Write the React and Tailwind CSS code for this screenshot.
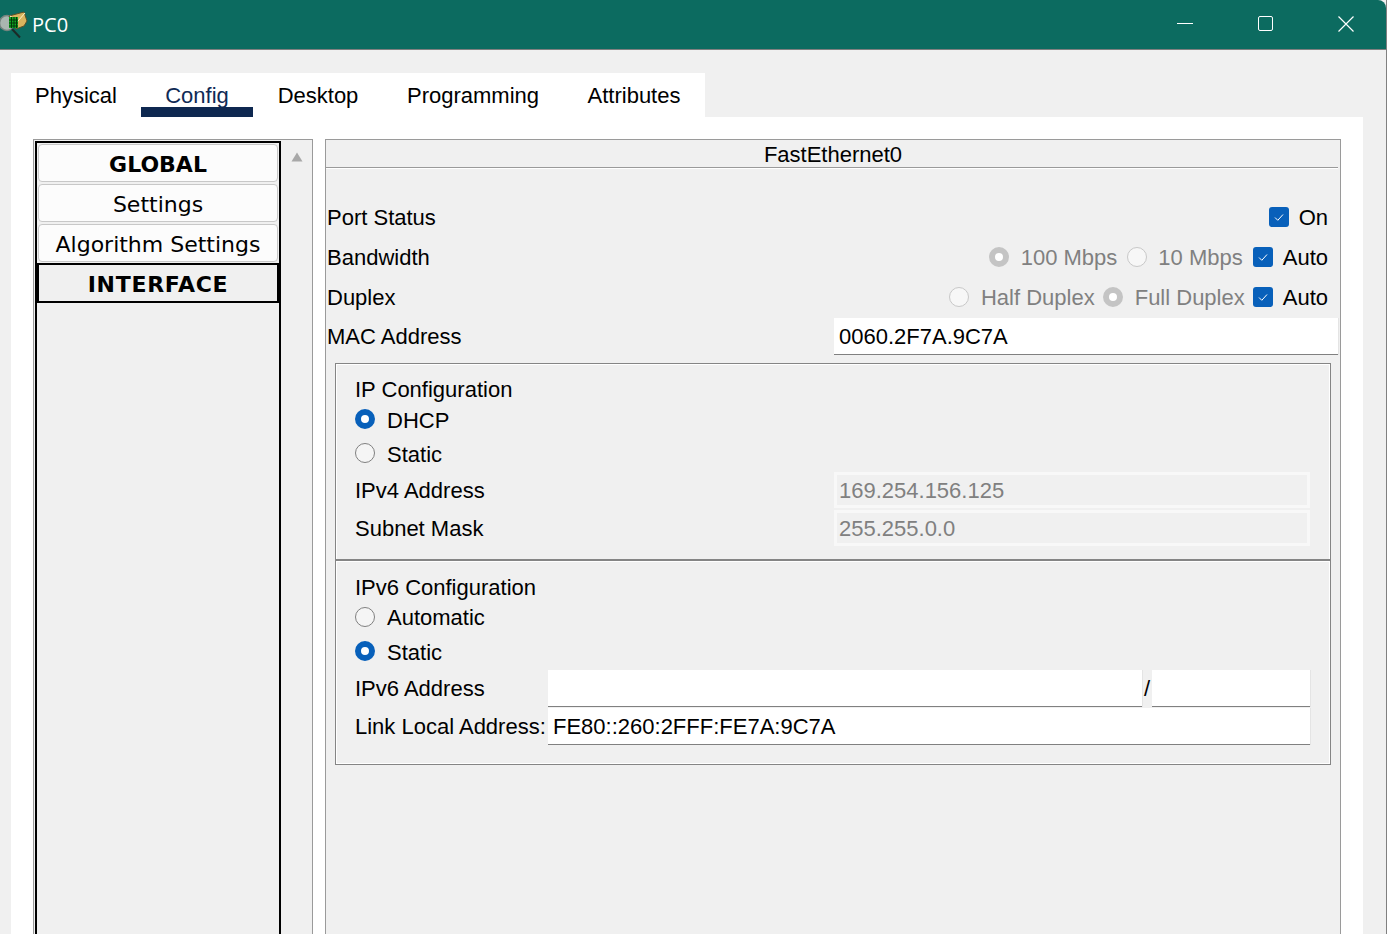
import React from 'react';

const tabs = [
  { label: 'Physical', width: 'w-[130px]' },
  { label: 'Config', width: 'w-[112px]', active: true },
  { label: 'Desktop', width: 'w-[130px]' },
  { label: 'Programming', width: 'w-[180px]' },
  { label: 'Attributes', width: 'w-[142px]' },
];

function AppIcon() {
  return (
    <svg width="28" height="28" viewBox="0 0 28 28" className="shrink-0">
      <circle cx="7" cy="12" r="7.5" fill="#a9b6b0" stroke="#75837e" strokeWidth="1.5" />
      <path d="M12 18l8 8.5" stroke="#1c2a27" strokeWidth="2" />
      <path d="M9 5l15-4 3 9-3 5-8 3z" fill="#d8b45e" stroke="#5f5026" strokeWidth="1" />
      <path d="M10 5l8 5 7-8" fill="none" stroke="#fff3c8" strokeWidth="1" />
      <rect x="9" y="6" width="9" height="11" fill="#10a822" />
      <path d="M11.5 6v11M14 6v11M16.5 6v11M9 9h9M9 12h9M9 15h9" stroke="#04350a" strokeWidth="1" />
    </svg>
  );
}

function Check() {
  return (
    <span className="w-5 h-5 rounded-[3px] bg-[#0860ba] flex items-center justify-center shrink-0">
      <svg width="12" height="12" viewBox="0 0 12 12" fill="none">
        <path d="M2 6.5l2.8 2.8L10 3.5" stroke="#fff" strokeWidth="1" />
      </svg>
    </span>
  );
}

function Radio({ kind, lift }) {
  const shift = lift ? '-translate-y-px' : '';
  if (kind === 'on') {
    return <span className={`w-5 h-5 rounded-full border-[6px] border-[#0860ba] bg-white shrink-0 ${shift}`} />;
  }
  if (kind === 'off') {
    return <span className={`w-5 h-5 rounded-full border border-[#808080] bg-[#f5f5f5] shrink-0 ${shift}`} />;
  }
  if (kind === 'disabledOn') {
    return <span className="w-5 h-5 rounded-full border-[6px] border-[#c4c4c4] bg-white shrink-0" />;
  }
  return <span className="w-5 h-5 rounded-full border border-[#c8c8c8] bg-[#f7f7f7] shrink-0" />;
}

function Row({ label, children }) {
  return (
    <div className="h-10 flex items-center justify-between pl-[1px] pr-[12px]">
      <span>{label}</span>
      <div className="flex items-center">{children}</div>
    </div>
  );
}

function RadioRow({ kind, label, className, lift, gap = 'gap-3' }) {
  return (
    <div className={`flex items-center ${gap} ${className}`}>
      <Radio kind={kind} lift={lift} />
      <span>{label}</span>
    </div>
  );
}

function ReadOnlyField({ value, className }) {
  return (
    <div className={`w-[476px] border-[3px] border-[#f8f8f8] bg-[#f0f0f0] text-[#808080] flex items-center pl-[2px] ${className}`}>
      {value}
    </div>
  );
}

function WhiteField({ value, className }) {
  return (
    <div className={`bg-white border-b border-[#808080] shadow-[1px_0_0_#e4e4e4] flex items-center pl-[5px] pt-[1px] ${className}`}>
      {value}
    </div>
  );
}

function Sidebar() {
  const btn = 'mx-[1px] pt-[2px] rounded-[4px] border border-[#c8c8c8] bg-[#fcfcfc] flex items-center justify-center';
  return (
    <div className="w-[280px] h-[900px] border border-[#9a9a9a] bg-[#f0f0f0] flex shrink-0 pl-[1px] pt-[1px] font-['DejaVu_Sans',sans-serif] text-[22px]">
      <div className="w-[246px] h-full border-2 border-black pt-[1px] flex flex-col">
        <div className={`${btn} h-[38px] font-bold`}>GLOBAL</div>
        <div className={`${btn} h-[38px] mt-[2px]`}>Settings</div>
        <div className={`${btn} h-[38px] mt-[2px]`}>Algorithm Settings</div>
        <div className="h-[40px] mt-[1px] pt-[2px] border-2 border-black bg-[#f0f0f0] flex items-center justify-center font-bold tracking-[0.7px]">INTERFACE</div>
      </div>
      <div className="flex-1 flex justify-center pt-[11px]">
        <svg width="12" height="10" viewBox="0 0 12 10">
          <path d="M6 0.5L11.5 9.5H0.5z" fill="#a8a8a8" />
        </svg>
      </div>
    </div>
  );
}

export default function App() {
  return (
    <div className="w-[1387px] h-[934px] overflow-hidden bg-[#f0f0f0] text-black text-[22px] font-['Liberation_Sans',Arial,sans-serif] flex flex-col border-r border-[#808080]">
      <div className="h-[50px] shrink-0 bg-[#0c6b60] border-b border-[#808080] rounded-tr-[8px] text-white flex items-center">
        <AppIcon />
        <span className="ml-[4px] text-[20px] font-['Open_Sans',sans-serif]">PC0</span>
        <div className="ml-auto flex items-center pb-[2px]">
          <svg width="16" height="2" viewBox="0 0 16 2" className="mr-[65px]">
            <rect width="16" height="1" fill="#fff" />
          </svg>
          <span className="w-[15px] h-[15px] rounded-[2px] border-[1.5px] border-[#fff] mr-[65px]" />
          <svg width="16" height="16" viewBox="0 0 16 16" className="mr-[32px]" fill="none">
            <path d="M0.5 0.5l15 15M15.5 0.5l-15 15" stroke="#fff" strokeWidth="1.2" />
          </svg>
        </div>
      </div>

      <div className="flex-1 pt-[23px] pl-[11px] pr-[23px] flex flex-col">
        <div className="flex w-[694px] h-[44px] bg-white shrink-0">
          {tabs.map(tab => (
            <div key={tab.label} className={`${tab.width} relative flex justify-center pt-[8px]`}>
              <span className={`leading-[29px] ${tab.active ? 'text-[#0f2a55]' : ''}`}>{tab.label}</span>
              {tab.active && <span className="absolute left-0 right-0 bottom-0 h-[10px] bg-[#0e2850]" />}
            </div>
          ))}
        </div>

        <div className="flex-1 bg-white pl-[22px] pt-[22px] flex gap-[12px]">
          <Sidebar />

          <div className="w-[1016px] h-[900px] border border-[#9a9a9a] bg-[#f0f0f0] shrink-0">
            <div className="h-[28px] mr-[2px] pt-[2px] pl-[2px] border-b border-[#9a9a9a] shadow-[0_1px_0_#fff] flex items-center justify-center">
              FastEthernet0
            </div>

            <div className="pt-[29px]">
              <Row label="Port Status">
                <Check />
                <span className="ml-[10px]">On</span>
              </Row>
              <Row label="Bandwidth">
                <RadioRow kind="disabledOn" label="100 Mbps" className="text-[#808080]" />
                <RadioRow kind="disabledOff" label="10 Mbps" gap="gap-[11px]" className="text-[#808080] ml-[10px] mr-[10px]" />
                <Check />
                <span className="ml-[10px]">Auto</span>
              </Row>
              <Row label="Duplex">
                <RadioRow kind="disabledOff" label="Half Duplex" className="text-[#808080]" />
                <RadioRow kind="disabledOn" label="Full Duplex" className="text-[#808080] ml-[8px] mr-[8px]" />
                <Check />
                <span className="ml-[10px]">Auto</span>
              </Row>
              <div className="h-[37px] mt-[1px] flex items-center justify-between pl-[1px] pr-[2px]">
                <span>MAC Address</span>
                <WhiteField value="0060.2F7A.9C7A" className="w-[504px] h-[37px]" />
              </div>
            </div>

            <div className="ml-[9px] mt-[8px] w-[996px] h-[402px] border border-[#858585] shadow-[inset_0_0_0_1px_#fff] pl-[19px] flex flex-col">
              <div className="h-[195px] pt-[11px]">
                <div className="h-[30px] pb-[2px] flex items-center">IP Configuration</div>
                <RadioRow kind="on" label="DHCP" className="h-[30px]" lift />
                <RadioRow kind="off" label="Static" className="h-[34px] mt-[2px]" lift />
                <div className="h-[36px] mt-[1px] flex items-center">
                  <span className="w-[479px]">IPv4 Address</span>
                  <ReadOnlyField value="169.254.156.125" className="h-[36px]" />
                </div>
                <div className="h-[36px] mt-[2px] flex items-center">
                  <span className="w-[479px]">Subnet Mask</span>
                  <ReadOnlyField value="255.255.0.0" className="h-[36px]" />
                </div>
              </div>
              <div className="-ml-[19px] h-[2px] bg-[#858585] shadow-[0_1px_0_#fff]" />
              <div className="pt-[12px]">
                <div className="h-[30px] pb-[2px] flex items-center">IPv6 Configuration</div>
                <RadioRow kind="off" label="Automatic" className="h-[30px] pb-[1px]" lift />
                <RadioRow kind="on" label="Static" className="h-[34px] mt-[2px]" lift />
                <div className="h-[37px] mt-[1px] flex items-center">
                  <span className="w-[193px]">IPv6 Address</span>
                  <WhiteField className="w-[594px] h-[37px]" />
                  <span className="w-[10px] text-center">/</span>
                  <WhiteField className="w-[158px] h-[37px]" />
                </div>
                <div className="h-[37px] mt-[1px] flex items-center">
                  <span className="w-[193px] whitespace-nowrap">Link Local Address:</span>
                  <WhiteField value="FE80::260:2FFF:FE7A:9C7A" className="w-[762px] h-[37px]" />
                </div>
              </div>
            </div>
          </div>
        </div>
      </div>
    </div>
  );
}
